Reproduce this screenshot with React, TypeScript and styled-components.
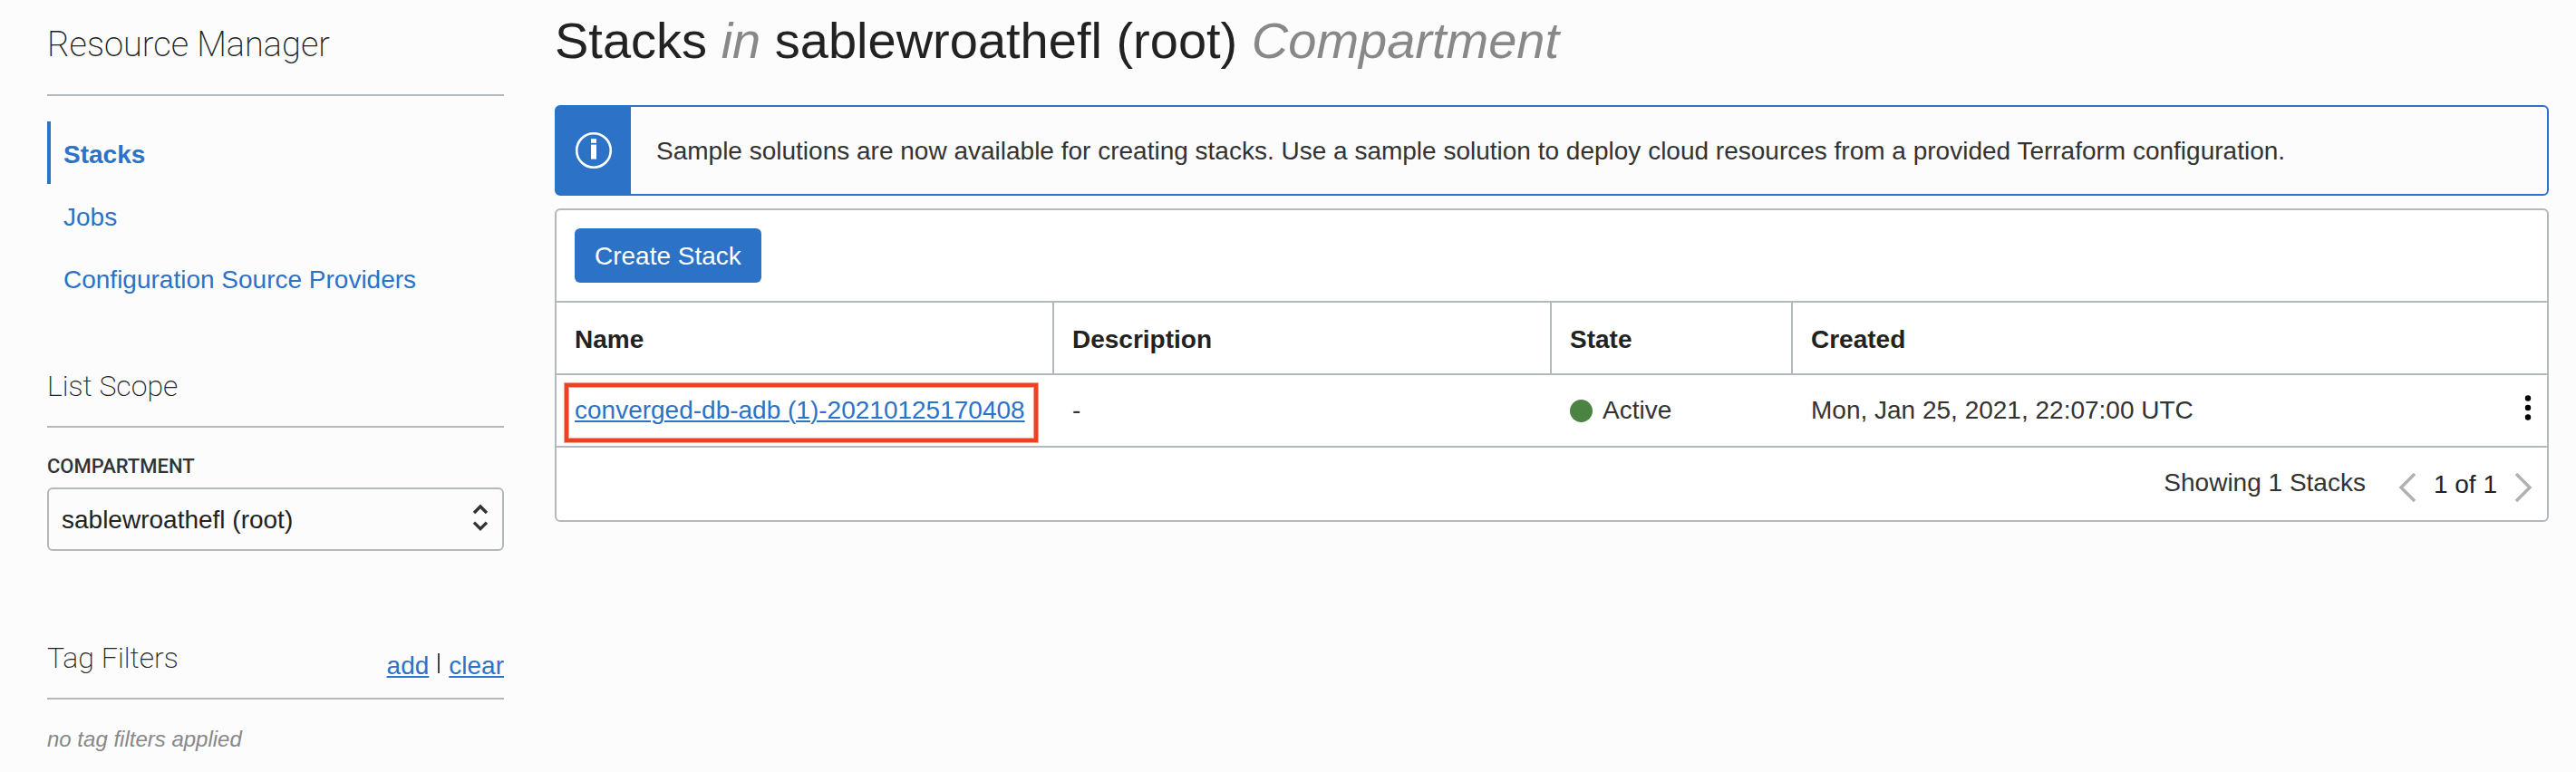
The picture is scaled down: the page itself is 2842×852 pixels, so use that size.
import React from 'react';
import styled, { createGlobalStyle } from 'styled-components';

const blue = '#2c72c7';
const line = '#b3b8be';
const ink = '#222';
const text = '#333';

const GlobalStyle = createGlobalStyle`
  *, *::before, *::after { box-sizing: border-box; }
  body {
    margin: 0;
    background: #fcfcfc;
    color: ${text};
    font-family: "Liberation Sans", Arial, sans-serif;
    font-size: 28px;
    line-height: 32px;
  }
  button, select { font: inherit; }
`;

const Page = styled.div`
  display: flex;
  align-items: flex-start;
  gap: 56px;
  padding: 0 30px 0 52px;
`;

const Sidebar = styled.aside`
  flex: 0 0 504px;
  padding-top: 27px;
`;

const ServiceTitle = styled.h2`
  margin: 0;
  padding-bottom: 33px;
  border-bottom: 2px solid ${line};
  color: ${ink};
  font: 200 38px/44px Roboto, sans-serif;
`;

const Nav = styled.nav`
  display: flex;
  flex-direction: column;
  margin-top: 28px;
`;

const NavLink = styled.a<{ $active?: boolean }>`
  padding: 21px 14px 16px;
  border-left: 4px solid ${p => (p.$active ? blue : 'transparent')};
  color: ${blue};
  font-weight: ${p => (p.$active ? 700 : 400)};
  text-decoration: none;
`;

const SectionHead = styled.div<{ $gap: number }>`
  display: flex;
  justify-content: space-between;
  align-items: flex-start;
  height: 66px;
  margin-top: ${p => p.$gap}px;
  border-bottom: 2px solid ${line};
`;

const SectionTitle = styled.h3`
  margin: 0;
  color: ${ink};
  font: 200 32px/40px Roboto, sans-serif;
`;

const TagActions = styled.div`
  display: flex;
  gap: 10px;
  padding-top: 13px;
`;

const Divider = styled.span`
  width: 2px;
  height: 22px;
  margin-top: 2px;
  background: #444;
`;

const Link = styled.a`
  color: ${blue};
  text-decoration: underline;
  text-decoration-thickness: 2px;
  text-underline-offset: 2px;
`;

const FieldLabel = styled.label`
  display: block;
  margin: 31px 0 11px;
  font: 500 22px/24px Roboto, sans-serif;
`;

const SelectWrap = styled.div`
  position: relative;

  svg {
    position: absolute;
    top: 17px;
    right: 17px;
    pointer-events: none;
  }
`;

const Select = styled.select`
  display: block;
  width: 100%;
  height: 70px;
  padding: 2px 14px 0;
  border: 2px solid ${line};
  border-radius: 6px;
  background: transparent;
  color: ${ink};
  appearance: none;
`;

const EmptyNote = styled.p`
  margin: 30px 0 0;
  color: #888;
  font-size: 24px;
  line-height: 28px;
  font-style: italic;
`;

const Main = styled.main`
  flex: 1;
  min-width: 0;
  padding-top: 13px;
`;

const Title = styled.h1`
  margin: 0;
  color: ${ink};
  font-size: 56px;
  font-weight: 400;
  line-height: 64px;

  em { color: #888; }
`;

const Banner = styled.div`
  display: flex;
  margin-top: 39px;
  border: 2px solid ${blue};
  border-radius: 6px;
`;

const BannerIcon = styled.div`
  display: flex;
  flex: 0 0 82px;
  align-items: center;
  justify-content: center;
  background: ${blue};
`;

const BannerText = styled.p`
  margin: 0;
  padding: 33px 28px 31px;
`;

const Panel = styled.section`
  margin-top: 14px;
  border: 2px solid ${line};
  border-radius: 6px;
  background: #fff;
`;

const Toolbar = styled.div`
  display: flex;
  padding: 20px;
  border-bottom: 2px solid ${line};
`;

const PrimaryButton = styled.button`
  height: 60px;
  padding: 2px 22px 0;
  border: 0;
  border-radius: 6px;
  background: ${blue};
  color: #fff;
`;

const Table = styled.table`
  width: 100%;
  border-collapse: separate;
  border-spacing: 0;
  table-layout: fixed;
`;

const Th = styled.th<{ $width?: string; $divided?: boolean }>`
  width: ${p => p.$width ?? 'auto'};
  padding: 25px 20px 21px;
  border-bottom: 2px solid ${line};
  border-right: ${p => (p.$divided ? `2px solid ${line}` : '0')};
  color: ${ink};
  text-align: left;
`;

const Td = styled.td`
  height: 80px;
  padding: 23px 20px;
  border-bottom: 2px solid ${line};
  white-space: nowrap;
`;

const MenuTd = styled(Td)`
  padding: 0 17px 0 0;
  text-align: right;
`;

const Highlighted = styled.span`
  position: relative;

  &::after {
    content: "";
    position: absolute;
    inset: -14px -14px -20px -11px;
    border: 4px solid #ee4023;
    box-shadow: 0 0 0 1px #f6a090, inset 0 0 0 1px #f6a090;
    pointer-events: none;
  }
`;

const Status = styled.span`
  display: flex;
  align-items: center;
  gap: 11px;

  &::before {
    content: "";
    width: 25px;
    height: 25px;
    border-radius: 50%;
    background: #4b8442;
  }
`;

const IconButton = styled.button`
  display: inline-flex;
  padding: 0;
  border: 0;
  background: none;
`;

const Footer = styled.div`
  display: flex;
  justify-content: flex-end;
  gap: 36px;
  padding: 23px 16px 15px;
`;

const Pager = styled.div`
  display: flex;
  align-items: center;
  gap: 19px;
  height: 42px;
  color: ${ink};
`;

const PageLabel = styled.span`
  padding-bottom: 6px;
`;

const InfoIcon = () => (
  <svg width="42" height="42" viewBox="0 0 42 42" aria-hidden="true">
    <circle cx="21" cy="21" r="18.8" fill="none" stroke="#fff" strokeWidth="2.6" />
    <rect x="18" y="8.2" width="6" height="4.6" fill="#fff" />
    <rect x="18" y="14.6" width="6" height="16" fill="#fff" />
  </svg>
);

const SortIcon = () => (
  <svg width="18" height="32" viewBox="0 0 18 32" fill="none" stroke="#333" strokeWidth="3.4" aria-hidden="true">
    <path d="M2 11 9 4l7 7M2 21.6l7 7 7-7" />
  </svg>
);

const KebabIcon = () => (
  <svg width="8" height="28" viewBox="0 0 8 28" aria-hidden="true">
    <circle cx="4" cy="3.5" r="3.2" />
    <circle cx="4" cy="14" r="3.2" />
    <circle cx="4" cy="24.5" r="3.2" />
  </svg>
);

const Chevron = ({ d }: { d: string }) => (
  <svg width="20" height="34" viewBox="0 0 20 34" fill="none" stroke="#b0b0b0" strokeWidth="3.4" aria-hidden="true">
    <path d={d} />
  </svg>
);

export default function App() {
  return (
    <>
      <GlobalStyle />
      <Page>
        <Sidebar>
          <ServiceTitle>Resource Manager</ServiceTitle>
          <Nav>
            <NavLink href="#stacks" $active>Stacks</NavLink>
            <NavLink href="#jobs">Jobs</NavLink>
            <NavLink href="#providers">Configuration Source Providers</NavLink>
          </Nav>

          <SectionHead $gap={65}>
            <SectionTitle>List Scope</SectionTitle>
          </SectionHead>
          <FieldLabel htmlFor="compartment">COMPARTMENT</FieldLabel>
          <SelectWrap>
            <Select id="compartment">
              <option>sablewroathefl (root)</option>
            </Select>
            <SortIcon />
          </SelectWrap>

          <SectionHead $gap={98}>
            <SectionTitle>Tag Filters</SectionTitle>
            <TagActions>
              <Link href="#add">add</Link>
              <Divider />
              <Link href="#clear">clear</Link>
            </TagActions>
          </SectionHead>
          <EmptyNote>no tag filters applied</EmptyNote>
        </Sidebar>

        <Main>
          <Title>
            Stacks <em>in</em> sablewroathefl (root) <em>Compartment</em>
          </Title>
          <Banner>
            <BannerIcon><InfoIcon /></BannerIcon>
            <BannerText>
              Sample solutions are now available for creating stacks. Use a sample solution to deploy cloud resources from a provided Terraform configuration.
            </BannerText>
          </Banner>

          <Panel>
            <Toolbar>
              <PrimaryButton type="button">Create Stack</PrimaryButton>
            </Toolbar>
            <Table>
              <thead>
                <tr>
                  <Th $width="25%" $divided>Name</Th>
                  <Th $width="25%" $divided>Description</Th>
                  <Th $width="266px" $divided>State</Th>
                  <Th>Created</Th>
                  <Th $width="60px" aria-label="Actions" />
                </tr>
              </thead>
              <tbody>
                <tr>
                  <Td>
                    <Highlighted>
                      <Link href="#stack">converged-db-adb (1)-20210125170408</Link>
                    </Highlighted>
                  </Td>
                  <Td>-</Td>
                  <Td><Status>Active</Status></Td>
                  <Td>Mon, Jan 25, 2021, 22:07:00 UTC</Td>
                  <MenuTd>
                    <IconButton type="button" aria-label="Stack actions"><KebabIcon /></IconButton>
                  </MenuTd>
                </tr>
              </tbody>
            </Table>
            <Footer>
              <span>Showing 1 Stacks</span>
              <Pager>
                <IconButton type="button" aria-label="Previous page"><Chevron d="M18 2 3 17l15 15" /></IconButton>
                <PageLabel>1 of 1</PageLabel>
                <IconButton type="button" aria-label="Next page"><Chevron d="m2 2 15 15L2 32" /></IconButton>
              </Pager>
            </Footer>
          </Panel>
        </Main>
      </Page>
    </>
  );
}
